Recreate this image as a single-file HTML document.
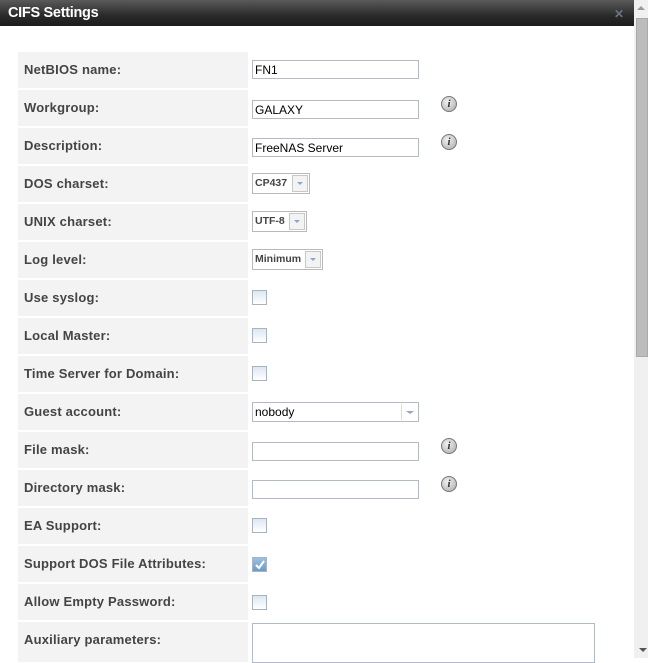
<!DOCTYPE html>
<html><head><style>
*{box-sizing:border-box}
body{margin:0;width:648px;height:658px;overflow:hidden;background:#fff;font-family:"Liberation Sans",Tahoma,sans-serif;position:relative}
.title{position:absolute;left:0;top:0;width:634px;height:26px;background:linear-gradient(#5a5a5a,#2a2a2a 60%,#1c1c1c);color:#fff;font-weight:bold;font-size:14.5px;line-height:26px;padding-left:8px;letter-spacing:-0.3px}
.x{position:absolute;left:614px;top:7px;color:#6a7480;font-size:12px;font-weight:bold}
.sb{position:absolute;left:634px;top:0;width:14px;height:658px;background:#f0f0f0}
.thumb{position:absolute;left:636px;top:18px;width:12px;height:339px;background:#bcbcbc;border:1px solid #aaa}
.au{position:absolute;left:637px;top:6px;width:0;height:0;border-left:4px solid transparent;border-right:4px solid transparent;border-bottom:4px solid #999}
.ad{position:absolute;left:639px;top:648px;width:0;height:0;border-left:4px solid transparent;border-right:4px solid transparent;border-top:4px solid #555}
.lab{position:absolute;left:18px;width:230px;height:36px;background:#f3f3f3;font-size:13px;letter-spacing:0.2px;font-weight:bold;color:#444;line-height:36px;padding-left:6px}
.inp{position:absolute;left:252px;width:167px;height:19px;border:1px solid #b3bac6;font-size:12px;line-height:19px;padding-left:2px;color:#000}
.info{position:absolute;left:441px;width:16px;height:16px;border-radius:50%;background:radial-gradient(circle at 40% 35%,#f2f2f2,#a8a8a8);border:1px solid #777;font:bold italic 11px "Liberation Serif",serif;color:#333;text-align:center;line-height:14px}
.cb{position:absolute;left:252px;width:15px;height:15px;border:1px solid #aab3c0;background:linear-gradient(#dde7f2,#fff)}
.sel{position:absolute;left:252px;height:21px;border:1px solid #b9b9b9;font-size:10.5px;font-weight:bold;color:#444;line-height:19px;padding-left:2px}
.sel .b{position:absolute;right:1px;top:1px;width:16px;height:17px;border:1px solid #c8c8c8;background:#f3f3f3}
.sel .b:after{content:"";position:absolute;left:4px;top:6px;border-left:3px solid transparent;border-right:3px solid transparent;border-top:3px solid #8fa5c5}
</style></head><body>
<div class="title">CIFS Settings</div><div class="x">✕</div>
<div class="sb"></div><div class="thumb"></div><div class="au"></div><div class="ad"></div>

<div class="lab" style="top:52px">NetBIOS name:</div><div class="inp" style="top:60px">FN1</div>
<div class="lab" style="top:90px">Workgroup:</div><div class="inp" style="top:100px">GALAXY</div><div class="info" style="top:96px">i</div>
<div class="lab" style="top:128px">Description:</div><div class="inp" style="top:138px">FreeNAS Server</div><div class="info" style="top:134px">i</div>
<div class="lab" style="top:166px">DOS charset:</div><div class="sel" style="top:173px;width:58px">CP437<span class="b"></span></div>
<div class="lab" style="top:204px">UNIX charset:</div><div class="sel" style="top:211px;width:55px">UTF-8<span class="b"></span></div>
<div class="lab" style="top:242px">Log level:</div><div class="sel" style="top:249px;width:71px">Minimum<span class="b"></span></div>
<div class="lab" style="top:280px">Use syslog:</div><div class="cb" style="top:290px"></div>
<div class="lab" style="top:318px">Local Master:</div><div class="cb" style="top:328px"></div>
<div class="lab" style="top:356px">Time Server for Domain:</div><div class="cb" style="top:366px"></div>
<div class="lab" style="top:394px">Guest account:</div><div class="inp" style="top:402px;height:20px;font-size:12px">nobody<span style="position:absolute;right:1px;top:1px;width:16px;height:16px;border-left:1px solid #ddd"><span style="position:absolute;left:4px;top:7px;border-left:4px solid transparent;border-right:4px solid transparent;border-top:3px solid #8fa5c5"></span></span></div>
<div class="lab" style="top:432px">File mask:</div><div class="inp" style="top:442px"></div><div class="info" style="top:438px">i</div>
<div class="lab" style="top:470px">Directory mask:</div><div class="inp" style="top:480px"></div><div class="info" style="top:476px">i</div>
<div class="lab" style="top:508px">EA Support:</div><div class="cb" style="top:518px"></div>
<div class="lab" style="top:546px">Support DOS File Attributes:</div><div class="cb" style="top:557px;background:linear-gradient(#9dc0e0,#6a9cc8)"><svg width="13" height="13" style="position:absolute;left:0;top:0"><path d="M3 7 L6 10 L11 3" stroke="#fff" stroke-width="2" fill="none"/></svg></div>
<div class="lab" style="top:584px">Allow Empty Password:</div><div class="cb" style="top:595px"></div>
<div class="lab" style="top:622px;height:40px;line-height:36px">Auxiliary parameters:</div><div class="inp" style="top:623px;width:343px;height:40px"></div>
</body></html>
